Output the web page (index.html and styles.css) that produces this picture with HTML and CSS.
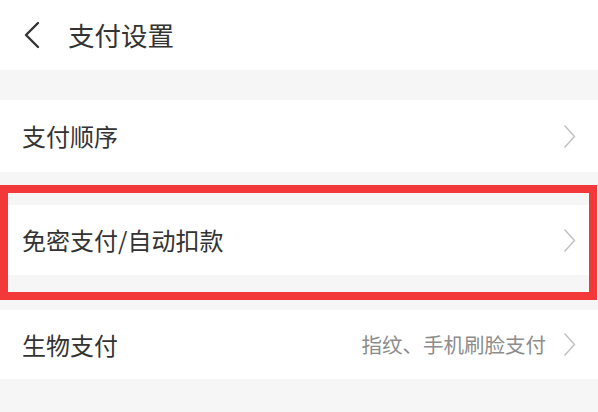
FILE: index.html
```html
<!DOCTYPE html>
<html lang="zh-CN">
<head>
<meta charset="utf-8">
<title>支付设置</title>
<link rel="stylesheet" href="styles.css">
</head>
<body>
<div class="page">
  <header class="header">
    <svg class="back" width="18" height="28" viewBox="0 0 18 28"><path d="M15 2 L3 14 L15 26" fill="none" stroke="#333" stroke-width="2.4" stroke-linecap="round" stroke-linejoin="round"/></svg>
    <h1 class="title">支付设置</h1>
  </header>
  <div class="gap gap-top"></div>
  <div class="row row-1">
    <span class="label">支付顺序</span>
    <svg class="chev" width="13" height="25" viewBox="0 0 13 25"><path d="M1.5 1.5 L11.5 12.5 L1.5 23.5" fill="none" stroke="#c2c2c2" stroke-width="1.5"/></svg>
  </div>
  <div class="gap gap-mid"></div>
  <div class="highlight">
    <div class="inner-gap inner-top"></div>
    <div class="row row-2">
      <span class="label">免密支付/自动扣款</span>
      <svg class="chev" width="13" height="25" viewBox="0 0 13 25"><path d="M1.5 1.5 L11.5 12.5 L1.5 23.5" fill="none" stroke="#c2c2c2" stroke-width="1.5"/></svg>
    </div>
    <div class="inner-gap inner-bottom"></div>
  </div>
  <div class="gap gap-low"></div>
  <div class="row row-3">
    <span class="label">生物支付</span>
    <span class="right">
      <span class="sub">指纹、手机刷脸支付</span>
      <svg class="chev" width="13" height="25" viewBox="0 0 13 25"><path d="M1.5 1.5 L11.5 12.5 L1.5 23.5" fill="none" stroke="#c2c2c2" stroke-width="1.5"/></svg>
    </span>
  </div>
</div>
</body>
</html>
```
FILE: styles.css
```css
html, body {
  margin: 0;
  padding: 0;
  background: #f6f6f6;
}
body {
  font-family: "Noto Sans CJK SC", "Noto Sans", sans-serif;
  color: #333;
  width: 598px;
  height: 412px;
  overflow: hidden;
}
.page {
  display: flex;
  flex-direction: column;
}
.header {
  height: 70px;
  background: #fff;
  display: flex;
  align-items: center;
  padding-left: 23px;
}
.back {
  display: block;
}
.title {
  margin: 0 0 0 27px;
  font-size: 26.5px;
  font-weight: 400;
  line-height: 1;
  color: #333;
}
.gap-top { height: 30px; }
.gap-mid { height: 13px; }
.gap-low { height: 10px; }
.row {
  background: #fff;
  display: flex;
  align-items: center;
  justify-content: space-between;
}
.row-1 {
  height: 72px;
  padding: 0 22px;
}
.row-3 {
  height: 69px;
  padding: 0 22px;
}
.label {
  font-size: 24px;
  line-height: 1;
  color: #333;
}
.chev {
  display: block;
}
.highlight {
  width: 581px;
  border: 8px solid #f23838;
  background: #f6f6f6;
}
.inner-top { height: 12px; }
.inner-bottom { height: 17px; }
.row-2 {
  height: 70px;
  padding: 0 13px 0 14px;
}
.right {
  display: flex;
  align-items: center;
  gap: 17px;
}
.sub {
  font-size: 20.5px;
  line-height: 1;
  color: #8c8c8c;
}
```
